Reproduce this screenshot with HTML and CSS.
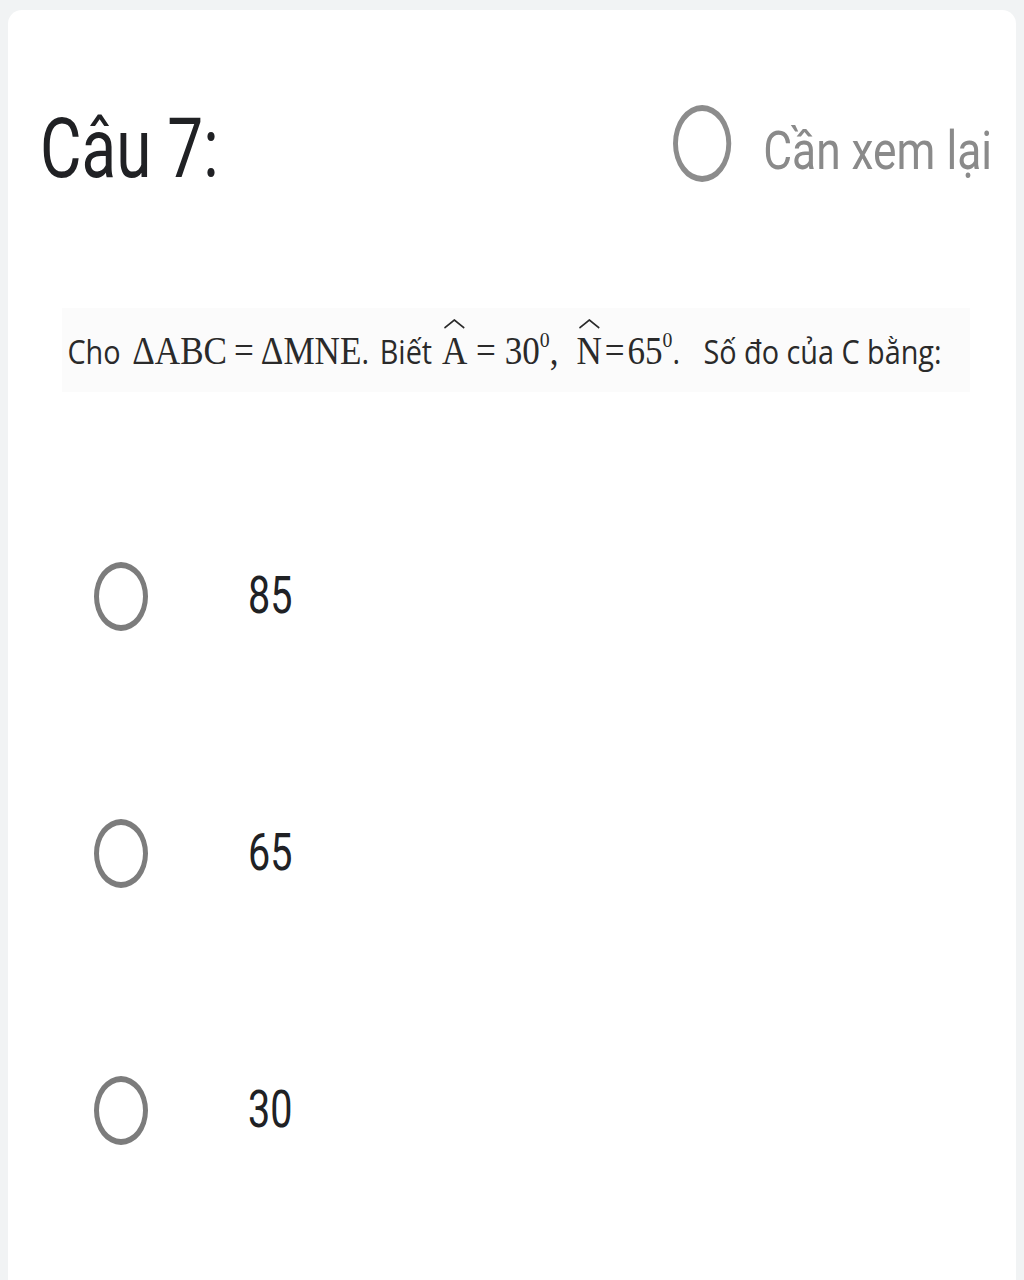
FILE: index.html
```html
<!DOCTYPE html>
<html lang="vi">
<head>
    <meta charset="UTF-8">
    <meta name="viewport" content="width=device-width, initial-scale=1.0">
    <title>Câu 7</title>
    <link rel="stylesheet" href="styles.css">
</head>
<body>
    <div class="card">
        <div class="question-head">
            <span class="title squeeze">Câu 7:</span>
            <div class="review">
                <span class="radio radio-big"></span>
                <span class="review-label">Cần xem lại</span>
            </div>
        </div>

        <div class="question-image">
            <span class="question-text"><span class="sans">Cho</span><span class="math gap-13">&Delta;ABC&#8201;=&#8201;&Delta;MNE</span><span class="sans">.</span><span class="sans gap-12">Biết</span><span class="math gap-11"><span class="accent">A<svg class="hat" viewBox="0 0 24 10"><path d="M1 9 Q8 4 12 1 Q16 4 23 9" /></svg></span> = 30<sup class="deg">0</sup>,</span><span class="math gap-20"><span class="accent">N<svg class="hat" viewBox="0 0 24 10"><path d="M1 9 Q8 4 12 1 Q16 4 23 9" /></svg></span>&#8202;=&#8202;65<sup class="deg">0</sup></span><span class="sans">.</span><span class="sans gap-26">Số đo của C bằng:</span></span>
        </div>

        <div class="options">
            <div class="option">
                <span class="radio"></span>
                <span class="option-label squeeze">85</span>
            </div>
            <div class="option">
                <span class="radio"></span>
                <span class="option-label squeeze">65</span>
            </div>
            <div class="option">
                <span class="radio"></span>
                <span class="option-label squeeze">30</span>
            </div>
        </div>
    </div>
</body>
</html>
```

FILE: styles.css
```css
body {
    margin: 0;
    padding: 10px 8px 0 8px;
    background-color: #f1f3f4;
    font-family: Roboto, "Liberation Sans", sans-serif;
    color: #202124;
}

.card {
    background-color: #fff;
    border-radius: 14px 14px 0 0;
    min-height: 1270px;
    padding: 0 24px 0 32px;
}

/* the screenshot is squeezed sideways, text follows it */
.squeeze {
    display: inline-block;
    transform: scaleX(0.76);
    transform-origin: left center;
}

.question-head {
    display: flex;
    justify-content: space-between;
    align-items: center;
    height: 110px;
    padding-top: 78px;
}

.title {
    font-size: 84px;
    line-height: 1;
    padding-top: 12px;
}

.review {
    display: flex;
    align-items: center;
    gap: 39px;
    transform: scaleX(0.82);
    transform-origin: right center;
}

.review-label {
    font-size: 54px;
    color: #8a8a8a;
    line-height: 1;
    padding-top: 16px;
}

.radio {
    box-sizing: border-box;
    display: inline-block;
    width: 54px;
    height: 69px;
    border: 5px solid #7c7c7c;
    border-width: 6px 5px;
    border-radius: 50%;
    flex-shrink: 0;
}

.radio-big {
    width: 71px;
    height: 77px;
    border-width: 6px;
    border-color: #8c8c8c;
}

.question-image {
    margin: 110px 0 0 22px;
    width: 908px;
    height: 84px;
    background-color: #fbfbfb;
    display: flex;
    align-items: center;
}

.question-text {
    display: inline-block;
    white-space: nowrap;
    padding-left: 6px;
    color: #2a2a2a;
    transform: scaleX(0.9);
    transform-origin: left center;
}

.sans {
    font-family: "Open Sans", "Liberation Sans", sans-serif;
    font-size: 32px;
}

.math {
    font-family: "Liberation Serif", serif;
    font-size: 39px;
}

.gap-11 { margin-left: 11px; }
.gap-12 { margin-left: 12px; }
.gap-13 { margin-left: 13px; }
.gap-20 { margin-left: 20px; }
.gap-26 { margin-left: 26px; }

.accent {
    position: relative;
    display: inline-block;
}

.hat {
    position: absolute;
    left: 1px;
    top: -9px;
    width: 92%;
    height: 10px;
    fill: none;
    stroke: #2a2a2a;
    stroke-width: 1.6;
}

.deg {
    font-size: 22px;
    vertical-align: 0;
    position: relative;
    top: -17px;
}

.options {
    display: flex;
    flex-direction: column;
    gap: 157px;
    margin-top: 154px;
}

.option {
    display: flex;
    align-items: center;
    gap: 100px;
    height: 100px;
    padding-left: 54px;
}

.option-label {
    font-size: 52px;
    line-height: 1;
}
```
